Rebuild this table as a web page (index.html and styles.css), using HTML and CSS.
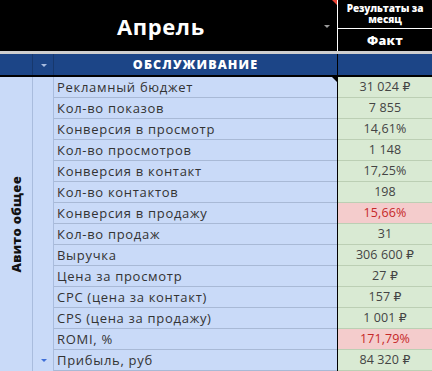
FILE: index.html
```html
<!DOCTYPE html>
<html>
<head>
<meta charset="utf-8">
<link rel="stylesheet" href="styles.css">
</head>
<body>
<div class="sheet">
  <div class="head">
    <div class="head-main">
      <span class="title">Апрель</span>
      <span class="arrow arrow-gray"></span>
      <span class="note note-red"></span>
    </div>
    <div class="head-side">
      <div class="head-top">Результаты за месяц</div>
      <div class="head-bottom">Факт</div>
    </div>
  </div>
  <div class="gap"></div>
  <div class="section">
    <div class="sec-a"></div>
    <div class="sec-b"><span class="arrow arrow-light"></span></div>
    <div class="sec-title">ОБСЛУЖИВАНИЕ</div>
    <div class="sec-val"></div>
  </div>
  <div class="body">
    <div class="col-a"><span class="vlabel">Авито общее</span></div>
    <div class="col-b"><span class="arrow arrow-blue"></span></div>
    <div class="rows">
      <div class="row"><div class="lbl">Рекламный бюджет<span class="note note-black"></span></div><div class="val">31 024 ₽</div></div>
      <div class="row"><div class="lbl">Кол-во показов</div><div class="val">7 855</div></div>
      <div class="row"><div class="lbl">Конверсия в просмотр</div><div class="val">14,61%</div></div>
      <div class="row"><div class="lbl">Кол-во просмотров</div><div class="val">1 148</div></div>
      <div class="row"><div class="lbl">Конверсия в контакт</div><div class="val">17,25%</div></div>
      <div class="row"><div class="lbl">Кол-во контактов</div><div class="val">198</div></div>
      <div class="row"><div class="lbl">Конверсия в продажу</div><div class="val bad">15,66%</div></div>
      <div class="row"><div class="lbl">Кол-во продаж</div><div class="val">31</div></div>
      <div class="row"><div class="lbl">Выручка</div><div class="val">306 600 ₽</div></div>
      <div class="row"><div class="lbl">Цена за просмотр</div><div class="val">27 ₽</div></div>
      <div class="row"><div class="lbl">CPC (цена за контакт)</div><div class="val">157 ₽</div></div>
      <div class="row"><div class="lbl">CPS (цена за продажу)</div><div class="val">1 001 ₽</div></div>
      <div class="row"><div class="lbl">ROMI, %</div><div class="val bad">171,79%</div></div>
      <div class="row"><div class="lbl">Прибыль, руб</div><div class="val">84 320 ₽</div></div>
    </div>
  </div>
</div>
</body>
</html>
```
FILE: styles.css
```css
* { box-sizing: border-box; }
html, body { margin: 0; padding: 0; background: #fff; }
body { font-family: "Open Sans", "DejaVu Sans", sans-serif; }
.sheet { width: 432px; height: 371px; overflow: hidden; }

.head { display: flex; height: 51px; background: #000; }
.head-main { position: relative; width: 337px; display: flex; align-items: center; padding-left: 117px; }
.title { color: #fff; font-weight: 700; font-size: 22px; letter-spacing: 0.6px; }
.head-side { width: 95px; border-left: 1px solid #fff; display: flex; flex-direction: column; }
.head-top { height: 29px; border-bottom: 1px solid #fff; color: #fff; font-weight: 800; font-size: 10px; line-height: 11px; text-align: center; display: flex; align-items: center; justify-content: center; padding: 0 2px; letter-spacing: -0.1px; }
.head-bottom { flex: 1; color: #fff; font-weight: 800; font-size: 12.5px; display: flex; align-items: center; justify-content: center; letter-spacing: 0.3px; }

.arrow { position: absolute; width: 0; height: 0; border-left: 3px solid transparent; border-right: 3px solid transparent; border-top: 3px solid; }
.arrow-gray { right: 7px; top: 25px; border-top-color: #9a9a9a; }
.arrow-light { left: 8px; top: 10px; border-top-color: #a9bde0; }
.arrow-blue { left: 8px; bottom: 9px; border-top-color: #3f6fd8; }

.note { position: absolute; right: 0; top: 0; width: 0; height: 0; border-left: 5px solid transparent; border-top: 5px solid; }
.note-red { border-top-color: #ea4335; }
.note-black { border-top-color: #000; right: 0; }

.gap { height: 3px; background: #cfcfcf; }

.section { display: flex; height: 23px; background: #1c4587; border-bottom: 2px solid #000; }
.sec-a { width: 33px; border-right: 1px solid #17386d; }
.sec-b { position: relative; width: 21px; border-right: 1px solid #17386d; }
.sec-title { width: 283px; color: #fff; font-weight: 800; font-size: 12.5px; display: flex; align-items: center; justify-content: center; letter-spacing: 1.1px; }
.sec-val { flex: 1; border-left: 1px solid #000; }

.body { display: flex; height: 294px; background: #c9daf8; }
.col-a { width: 33px; border-right: 1px solid #a9bcdd; display: flex; align-items: center; justify-content: center; }
.vlabel { writing-mode: vertical-rl; transform: rotate(180deg); font-weight: 800; font-size: 13px; color: #111; white-space: nowrap; letter-spacing: 0.3px; }
.col-b { position: relative; width: 21px; border-right: 1px solid #a9bcdd; }
.rows { flex: 1; display: flex; flex-direction: column; }
.row { display: flex; height: 21px; border-bottom: 1px solid #a8b9d6; }
.lbl { position: relative; width: 283px; padding-left: 3px; font-size: 13px; color: #333; line-height: 20px; white-space: nowrap; letter-spacing: 0.7px; }
.val { flex: 1; background: #d9ead3; border-left: 1px solid #000; text-align: center; font-size: 12.5px; line-height: 20px; color: #444; letter-spacing: 0.1px; box-shadow: inset 0 -1px 0 #bccfb4; margin-bottom: -1px; }
.val.bad { background: #f4cccc; color: #c62828; }
```
